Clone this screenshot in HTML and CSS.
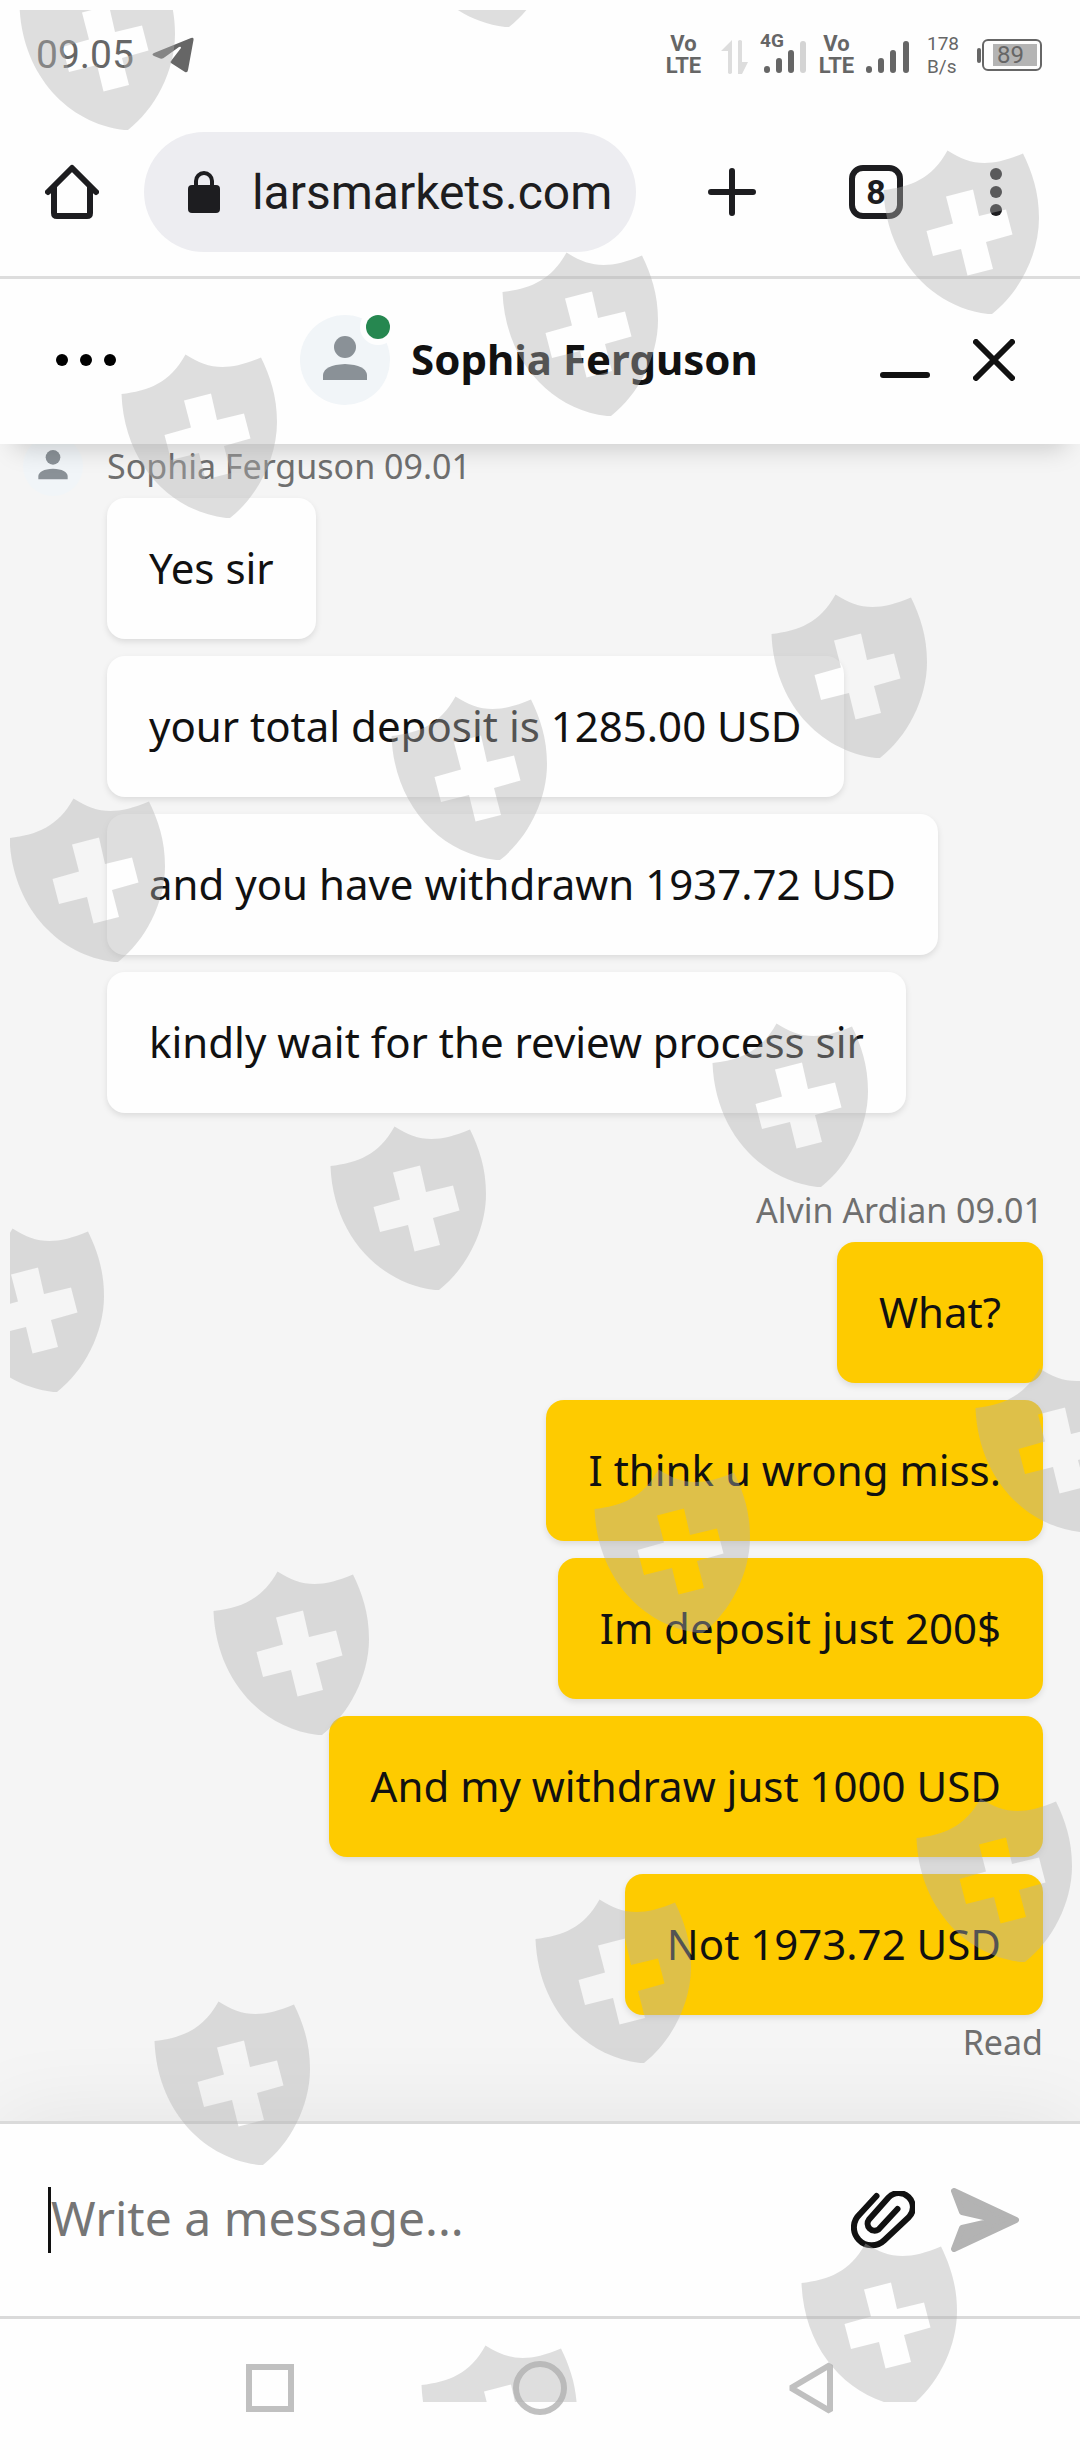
FILE: index.html
```html
<!DOCTYPE html>
<html lang="en">
<head>
<meta charset="utf-8">
<meta name="viewport" content="width=device-width, initial-scale=1">
<title>larsmarkets.com</title>
<link rel="stylesheet" href="styles.css">
</head>
<body>
<div class="status-bar">
  <span class="clock">09.05</span>
  <svg class="telegram" width="42" height="36" viewBox="0 0 42 36" aria-hidden="true"><path d="M2 16 39 1q3-1 2.500 2L36 33q-.5 3-3 2L19 26q-1-1 0-2L29 11q0-2-2-1L13 20q-3 3-6 1l-5-2q-3-1.500 0-3z"/></svg>
  <div class="indicators">
    <span class="volte">Vo<br>LTE</span>
    <svg width="38" height="44" viewBox="0 0 38 44" aria-hidden="true"><g class="faint"><path d="M20 7v33q-2 2-4 0V18H9z"/><path d="M26 8q2-2 4 0v21h6L30 41h-4z"/></g></svg>
    <svg width="48" height="56" viewBox="0 -6 48 56" aria-hidden="true"><text x="0" y="14" class="net">4G</text><g class="bars"><path d="M7 36v1M19 28v9M31 20v17"/><path class="weak" d="M43 11v26"/></g></svg>
    <span class="volte">Vo<br>LTE</span>
    <svg width="52" height="44" viewBox="0 0 52 44" aria-hidden="true"><g class="bars"><path d="M4 36v1M16 28v9M28 20v17M41 11v26"/></g></svg>
    <span class="rate">178<br>B/s</span>
    <svg width="70" height="44" viewBox="0 0 70 44" aria-hidden="true"><rect x="5" y="15" width="4" height="15" rx="2"/><rect class="shell" x="11" y="7" width="58" height="30" rx="5"/><rect class="charge" x="21" y="11" width="44" height="22"/><text x="25" y="30" class="level">89</text></svg>
  </div>
</div>

<header class="toolbar">
  <button class="home" aria-label="Home"><svg width="54" height="56" viewBox="0 0 54 56"><path d="M3 28 27 4l24 24M9 23v26q0 3 3 3h30q3 0 3-3V23"/></svg></button>
  <a class="address" href="https://larsmarkets.com">
    <svg width="32" height="42" viewBox="0 0 32 42" aria-hidden="true"><rect y="14" width="32" height="28" rx="4"/><path d="M8 16v-6a8 8 0 0 1 16 0v6"/></svg>
    <span>larsmarkets.com</span>
  </a>
  <button class="action" aria-label="New tab"><svg width="48" height="48" viewBox="0 0 48 48"><path d="M24 3v42M3 24h42"/></svg></button>
  <button class="action" aria-label="Open tabs"><span class="tab-count">8</span></button>
  <button class="more" aria-label="More"><svg width="12" height="48" viewBox="0 0 12 48"><circle cx="6" cy="6" r="6"/><circle cx="6" cy="24" r="6"/><circle cx="6" cy="42" r="6"/></svg></button>
</header>

<main class="chat">
  <div class="chat-header">
    <button class="options" aria-label="Options"><svg width="60" height="12" viewBox="0 0 60 12"><circle cx="6" cy="6" r="6"/><circle cx="30" cy="6" r="6"/><circle cx="54" cy="6" r="6"/></svg></button>
    <div class="agent">
      <span class="avatar"><svg viewBox="0 0 90 90" aria-hidden="true"><circle class="disc" cx="45" cy="45" r="45"/><circle cx="45" cy="32" r="11"/><path d="M23 65v-5q1-10 22-11 21 1 22 11v5z"/></svg><i class="online"></i></span>
      <h1>Sophia Ferguson</h1>
    </div>
    <button class="control" aria-label="Minimize"><svg width="52" height="42" viewBox="0 0 52 42"><path d="M4 36h44"/></svg></button>
    <button class="control" aria-label="Close"><svg width="42" height="42" viewBox="0 0 42 42"><path d="M3 3l36 36M39 3 3 39"/></svg></button>
  </div>

  <div class="thread">
    <section class="group">
      <p class="meta"><svg class="avatar-small" viewBox="0 0 90 90" aria-hidden="true"><circle class="disc" cx="45" cy="45" r="45"/><circle cx="45" cy="32" r="11"/><path d="M23 65v-5q1-10 22-11 21 1 22 11v5z"/></svg>Sophia Ferguson 09.01</p>
      <div class="bubbles">
        <p class="bubble">Yes sir</p>
        <p class="bubble">your total deposit is 1285.00 USD</p>
        <p class="bubble">and you have withdrawn 1937.72 USD</p>
        <p class="bubble">kindly wait for the review process sir</p>
      </div>
    </section>
    <section class="group own">
      <p class="meta">Alvin Ardian 09.01</p>
      <div class="bubbles">
        <p class="bubble">What?</p>
        <p class="bubble">I think u wrong miss.</p>
        <p class="bubble">Im deposit just 200$</p>
        <p class="bubble">And my withdraw just 1000 USD</p>
        <p class="bubble">Not 1973.72 USD</p>
      </div>
      <p class="receipt">Read</p>
    </section>
  </div>

  <form class="composer">
    <span class="caret"></span>
    <input type="text" aria-label="Message" placeholder="Write a message...">
    <button type="button" class="attach" aria-label="Attach file"><svg width="64" height="58" viewBox="0 0 64 58"><path d="M25.500 5 8.500 23.500A17.500 17.500 0 0 0 33 49.500L58 26A14 14 0 0 0 37.500 6.500L18 28.500A7 7 0 0 0 27.500 38.500L46.500 18"/></svg></button>
    <button type="button" class="send" aria-label="Send"><svg width="70" height="64" viewBox="0 0 70 64"><path d="M4 3 66 32 4 61 12 40 47 32 12 24z"/></svg></button>
  </form>
</main>

<nav class="system-nav" aria-label="System">
  <button aria-label="Recent apps"><svg width="54" height="54" viewBox="0 0 54 54"><path d="M6 6h42v42H6z"/></svg></button>
  <button aria-label="Home screen"><svg width="54" height="54" viewBox="0 0 54 54"><circle cx="27" cy="27" r="24"/></svg></button>
  <button aria-label="Back"><svg width="54" height="54" viewBox="0 0 54 54"><path stroke-linejoin="bevel" d="M8 27 47 4v46z"/></svg></button>
</nav>

<svg class="watermark" viewBox="0 0 1080 2460" preserveAspectRatio="xMidYMin slice" aria-hidden="true">
  <defs>
    <clipPath id="area"><rect x="10" y="10" width="1070" height="2392"/></clipPath>
    <path id="shield" fill-rule="evenodd" d="M.5 40C27 37 49 29 64.500.5 87 15 106 18 140 3.500 149 22 156 42 156 68 156 105 136 143 109 164H105C48 157 3 108 .5 40zM63 46.500 90 39.500 96 66 123 59.500 129.500 84.500 103 92 110 119 84.500 125.500 78 99 50 106 43.500 81 70 73.500z"/>
  </defs>
  <g clip-path="url(#area)">
    <use href="#shield" x="19" y="-34"/>
    <use href="#shield" x="400" y="-137"/>
    <use href="#shield" x="883" y="150"/>
    <use href="#shield" x="502" y="252"/>
    <use href="#shield" x="121" y="354"/>
    <use href="#shield" x="771" y="594"/>
    <use href="#shield" x="391" y="696"/>
    <use href="#shield" x="9" y="798"/>
    <use href="#shield" x="712" y="1023"/>
    <use href="#shield" x="330" y="1126"/>
    <use href="#shield" x="-52" y="1228"/>
    <use href="#shield" x="975" y="1368"/>
    <use href="#shield" x="594" y="1469"/>
    <use href="#shield" x="213" y="1571"/>
    <use href="#shield" x="916" y="1798"/>
    <use href="#shield" x="535" y="1899"/>
    <use href="#shield" x="154" y="2001"/>
    <use href="#shield" x="801" y="2243"/>
    <use href="#shield" x="421" y="2345"/>
  </g>
</svg>
</body>
</html>
```
FILE: styles.css
```css
* {
  box-sizing: border-box;
}

body {
  position: relative;
  display: flex;
  flex-direction: column;
  min-height: 100vh;
  margin: 0;
  background: #fefefe;
  color: #111;
  font-family: "Noto Sans", sans-serif;
  overflow-x: hidden;
}

h1,
p {
  margin: 0;
}

button {
  display: flex;
  align-items: center;
  justify-content: center;
  padding: 0;
  border: 0;
  background: none;
  color: inherit;
  font-family: inherit;
}

svg {
  flex: none;
}

/* Phone status bar */
.status-bar {
  display: flex;
  align-items: center;
  height: 108px;
  padding: 2px 38px 0 36px;
  color: #666;
  fill: #666;
  font-family: Roboto, sans-serif;
}

.clock {
  font-size: 39px;
}

.telegram {
  margin-left: 18px;
}

.indicators {
  display: flex;
  align-items: center;
  gap: 10px;
  margin-left: auto;
}

.volte {
  display: flex;
  justify-content: center;
  width: 37px;
  font-size: 22px;
  font-weight: 700;
  line-height: 22px;
  text-align: center;
}

.rate {
  width: 35px;
  font-size: 19px;
  line-height: 23px;
}

.faint {
  fill: #ddd;
}

.net {
  font-size: 19px;
  font-weight: 700;
}

.bars {
  stroke: #666;
  stroke-width: 6px;
  stroke-linecap: round;
}

.weak {
  stroke: #d4d4d4;
}

.shell {
  fill: none;
  stroke: #666;
  stroke-width: 2px;
}

.charge {
  fill: #b4b4b4;
}

.level {
  font-size: 24px;
}

/* Browser toolbar */
.toolbar {
  display: flex;
  align-items: center;
  padding: 24px 36px 24px 24px;
  border-bottom: 3px solid #ddd;
  color: #1d1d20;
  font-family: Roboto, sans-serif;
}

.home {
  width: 96px;
}

.home svg,
.action svg {
  fill: none;
  stroke: currentColor;
  stroke-width: 6px;
  stroke-linecap: round;
  stroke-linejoin: round;
}

.address {
  display: flex;
  flex: 1;
  align-items: center;
  gap: 32px;
  height: 120px;
  margin: 0 24px;
  padding: 0 24px 0 44px;
  border-radius: 60px;
  background: #ededf1;
  color: inherit;
  fill: currentColor;
  font-size: 48px;
  text-decoration: none;
}

.address path {
  fill: none;
  stroke: currentColor;
  stroke-width: 4px;
}

.action {
  width: 144px;
}

.tab-count {
  display: grid;
  place-items: center;
  width: 54px;
  height: 54px;
  border: 6px solid;
  border-radius: 14px;
  font-size: 34px;
  font-weight: 700;
  line-height: 42px;
}

.more {
  width: 96px;
  fill: currentColor;
}

/* Chat widget */
.chat {
  display: flex;
  flex: 1;
  flex-direction: column;
}

.chat-header {
  position: relative;
  z-index: 1;
  display: flex;
  align-items: center;
  height: 165px;
  padding: 0 42px 3px 36px;
  background: #fefefe;
  box-shadow: 0 18px 24px -14px rgba(0, 0, 0, 0.18);
}

.options {
  width: 100px;
}

.agent {
  display: flex;
  flex: 1;
  align-items: center;
  justify-content: center;
  gap: 21px;
  padding-left: 62px;
}

.agent h1 {
  padding-bottom: 2px;
  font-size: 42px;
  line-height: 56px;
}

.avatar {
  position: relative;
  display: flex;
  width: 90px;
  height: 90px;
}

.avatar svg,
.avatar-small {
  fill: #8a9197;
}

.avatar .disc,
.avatar-small .disc {
  fill: #f1f5f8;
}

.online {
  position: absolute;
  top: 0;
  right: 0;
  width: 24px;
  height: 24px;
  border-radius: 50%;
  background: #268750;
  box-shadow: 0 0 0 6px #fefefe;
}

.control {
  width: 89px;
}

.control svg,
.attach svg {
  fill: none;
  stroke: #111;
  stroke-width: 6px;
  stroke-linecap: round;
  stroke-linejoin: round;
}

.thread {
  display: flex;
  flex: 1;
  flex-direction: column;
  gap: 75px;
  padding: 0 37px 56px 23px;
  background: #f5f5f5;
}

.meta {
  display: flex;
  align-items: center;
  gap: 24px;
  height: 44px;
  margin-bottom: 10px;
  color: #6f6f6f;
  font-size: 34px;
  line-height: 44px;
}

.avatar-small {
  width: 60px;
  height: 60px;
}

.bubbles {
  display: flex;
  flex-direction: column;
  align-items: flex-start;
  gap: 17px;
  padding-left: 84px;
}

.bubble {
  padding: 41px 42px 43px;
  border-radius: 18px;
  background: #fefefe;
  box-shadow: 0 3px 6px rgba(0, 0, 0, 0.1);
  font-size: 42px;
  line-height: 57px;
}

.own .meta {
  justify-content: flex-end;
}

.own .bubbles {
  align-items: flex-end;
}

.own .bubble {
  background: #fecb00;
}

.receipt {
  margin-top: 5px;
  color: #6f6f6f;
  font-size: 34px;
  line-height: 44px;
  text-align: right;
}

.composer {
  display: flex;
  align-items: center;
  height: 198px;
  padding: 0 50px 0 48px;
  border-top: 3px solid #dadada;
  border-bottom: 3px solid #dadada;
  background: #fefefe;
  box-shadow: 0 0 90px rgba(0, 0, 0, 0.08);
}

.caret {
  width: 3px;
  height: 66px;
  background: #111;
}

.composer input {
  flex: 1;
  min-width: 0;
  padding: 0 0 4px;
  border: 0;
  outline: 0;
  background: none;
  color: #111;
  font: 48px/66px "Noto Sans", sans-serif;
}

.composer input::placeholder {
  color: #757575;
  opacity: 1;
}

.attach,
.send {
  width: 90px;
}

.send {
  margin-left: 12px;
}

.send path {
  fill: #b3b3b3;
  stroke: #b3b3b3;
  stroke-width: 6px;
  stroke-linejoin: round;
}

/* System navigation */
.system-nav {
  position: relative;
  display: flex;
  align-items: center;
  justify-content: center;
  gap: 216px;
  height: 141px;
  padding-bottom: 3px;
  background: #fefefe;
}

.system-nav svg {
  fill: none;
  stroke: #c0c0c0;
  stroke-width: 6px;
}

/* Shield pattern laid over the whole screen */
.watermark {
  position: absolute;
  z-index: 2;
  inset: 0;
  width: 100%;
  height: 100%;
  fill: rgba(178, 178, 178, 0.41);
  pointer-events: none;
}
```
